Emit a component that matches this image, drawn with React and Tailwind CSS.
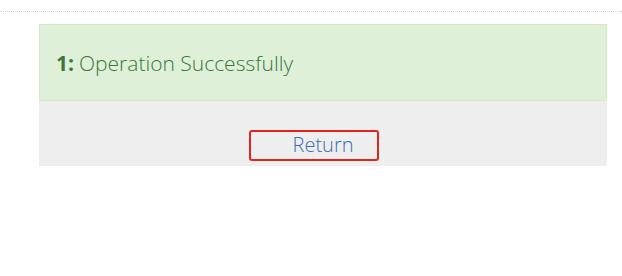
export default function App() {
  return (
    <div className="w-[622px] h-[276px] bg-white font-['Open_Sans','Segoe_UI',sans-serif]">
      <div className="pt-[11px]">
        <div className="border-t border-dotted border-[#d4d4d4]" />
      </div>
      <div className="ml-[39px] mr-[15px] mt-[12px]">
        <div className="h-[77px] bg-[#dff0d8] border border-[#d6e9c6] flex items-center pl-[16px] pt-[2px] text-[21px] text-[#3c763d] font-light">
          <span className="font-bold mr-[5px]">1:</span>
          <span>Operation Successfully</span>
        </div>
        <div className="h-[65px] bg-[#eeeeee] flex justify-center pt-[32px]">
          <a href="#" className="relative text-[20px] leading-[24px] text-[#3a6db5] font-light">
            Return
            <span className="absolute left-[-44px] top-[-3px] w-[130px] h-[31px] border-[2.5px] border-[#e3231c] rounded-[3px]" />
          </a>
        </div>
      </div>
    </div>
  );
}
